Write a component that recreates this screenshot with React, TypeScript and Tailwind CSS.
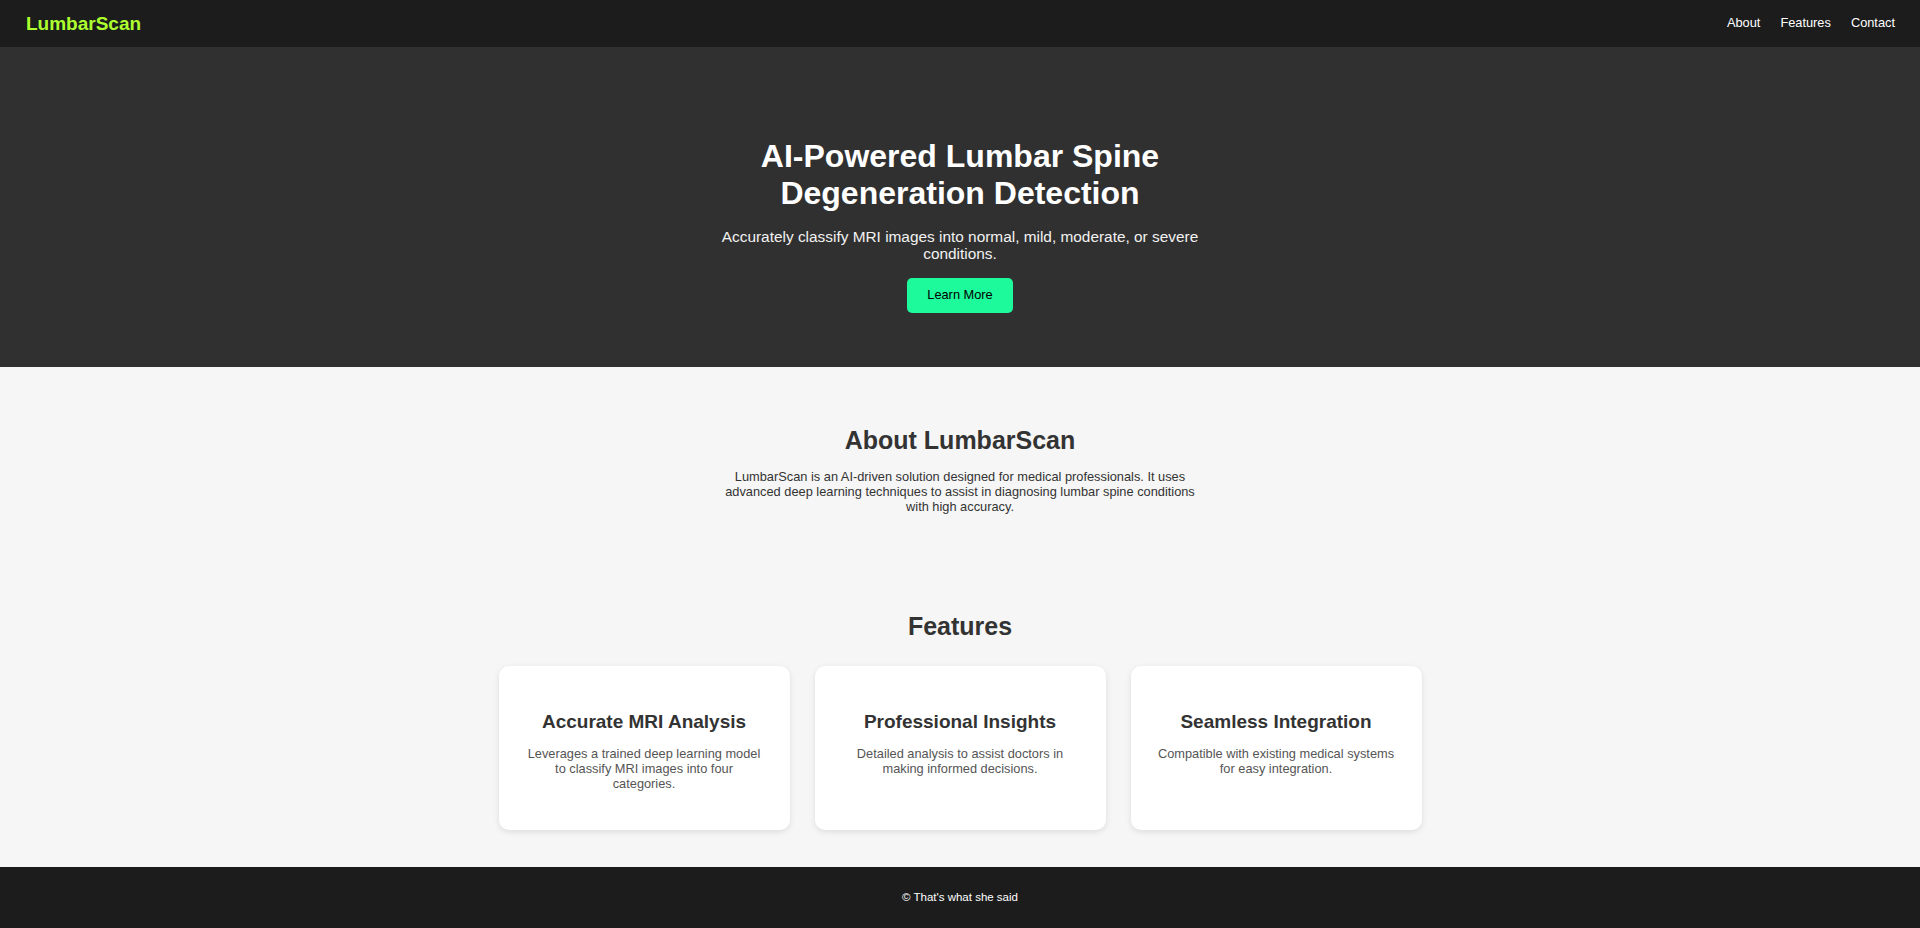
import React from "react";

const features = [
  {
    title: "Accurate MRI Analysis",
    desc: "Leverages a trained deep learning model to classify MRI images into four categories.",
  },
  {
    title: "Professional Insights",
    desc: "Detailed analysis to assist doctors in making informed decisions.",
  },
  {
    title: "Seamless Integration",
    desc: "Compatible with existing medical systems for easy integration.",
  },
];

export default function App() {
  return (
    <div className="flex h-[928px] flex-col overflow-hidden bg-[#f6f6f6] font-['Liberation_Sans',Arial,sans-serif] leading-[1.15]">
      <header className="flex h-[47px] shrink-0 items-center justify-between bg-[#1c1c1c] pl-[26px] pr-[25px]">
        <div className="text-[19px] font-bold text-[#adff2f]">LumbarScan</div>
        <nav className="flex items-center gap-[20px] text-[12.8px] text-white">
          <a href="#about">About</a>
          <a href="#features">Features</a>
          <a href="#contact">Contact</a>
        </nav>
      </header>

      <section className="flex shrink-0 flex-col items-center bg-[#303030] pb-[54px] pt-[91px] text-center text-white">
        <div className="flex max-w-[500px] flex-col items-center">
          <h1 className="mb-[16px] text-[32px] font-bold leading-[1.15]">
            AI-Powered Lumbar Spine Degeneration Detection
          </h1>
          <p className="mb-[15px] text-[15.4px] leading-[1.15] text-[#f2f2f2]">
            Accurately classify MRI images into normal, mild, moderate, or severe conditions.
          </p>
          <button className="h-[35px] rounded-[5px] bg-[#1dfa9c] px-[20px] text-[12.8px] text-black">
            Learn More
          </button>
        </div>
      </section>

      <main className="flex flex-1 flex-col items-center pt-[59px] text-center text-[#333]">
        <section id="about" className="flex max-w-[480px] flex-col items-center">
          <h2 className="mb-[14px] text-[25px] font-bold leading-[1.15]">About LumbarScan</h2>
          <p className="text-[12.8px] leading-[15px]">
            LumbarScan is an AI-driven solution designed for medical professionals. It uses advanced
            deep learning techniques to assist in diagnosing lumbar spine conditions with high
            accuracy.
          </p>
        </section>

        <section id="features" className="mt-[98px] flex flex-col items-center">
          <h2 className="mb-[25px] text-[25px] font-bold leading-[1.15]">Features</h2>
          <div className="flex items-stretch gap-[25px]">
            {features.map((f) => (
              <div
                key={f.title}
                className="h-[164px] w-[291px] rounded-[10px] bg-white px-[25px] pt-[45px] shadow-[0_2px_6px_rgba(0,0,0,0.1)]"
              >
                <h3 className="mb-[13px] text-[19px] font-bold leading-[22px] text-[#333]">
                  {f.title}
                </h3>
                <p className="text-[12.8px] leading-[15px] text-[#555]">{f.desc}</p>
              </div>
            ))}
          </div>
        </section>
      </main>

      <footer
        id="contact"
        className="flex h-[61px] shrink-0 items-center justify-center bg-[#1c1c1c] pt-[1px] text-[11.5px] text-white"
      >
        © That's what she said
      </footer>
    </div>
  );
}
